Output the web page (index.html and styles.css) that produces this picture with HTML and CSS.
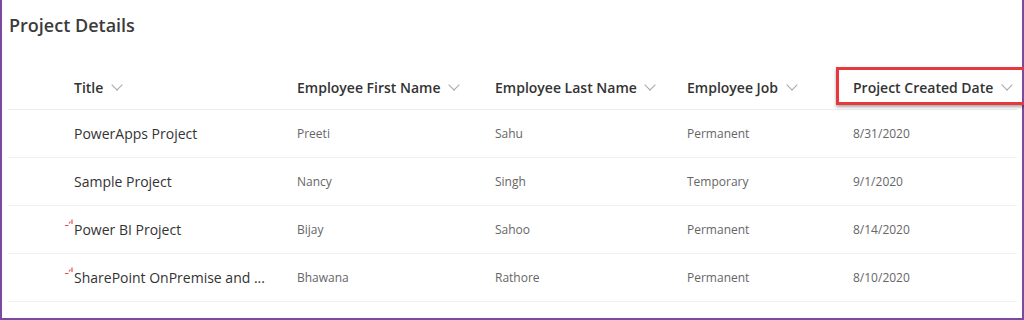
FILE: index.html
```html
<!DOCTYPE html>
<html lang="en">
<head>
  <meta charset="UTF-8" />
  <title>Project Details</title>
  <link rel="stylesheet" href="styles.css">
</head>
<body>
  <div class="frame">
    <h1 class="list-title">Project Details</h1>

    <div class="list">
      <div class="row head">
        <div class="cell title">Title <span class="chev"></span></div>
        <div class="cell">Employee First Name <span class="chev"></span></div>
        <div class="cell">Employee Last Name <span class="chev"></span></div>
        <div class="cell">Employee Job <span class="chev"></span></div>
        <div class="cell">
          <span class="marked">Project Created Date <span class="chev"></span></span>
        </div>
      </div>

      <div class="row">
        <div class="cell title">PowerApps Project</div>
        <div class="cell">Preeti</div>
        <div class="cell">Sahu</div>
        <div class="cell">Permanent</div>
        <div class="cell">8/31/2020</div>
      </div>
      <div class="row">
        <div class="cell title">Sample Project</div>
        <div class="cell">Nancy</div>
        <div class="cell">Singh</div>
        <div class="cell">Temporary</div>
        <div class="cell">9/1/2020</div>
      </div>
      <div class="row">
        <div class="cell title">
          <svg class="new" width="9" height="9" viewBox="0 0 9 9"><path d="M0 6.5h3.5M4 4.5L5.5 2.5M7 5V0.5" /></svg>
          Power BI Project
        </div>
        <div class="cell">Bijay</div>
        <div class="cell">Sahoo</div>
        <div class="cell">Permanent</div>
        <div class="cell">8/14/2020</div>
      </div>
      <div class="row">
        <div class="cell title">
          <svg class="new" width="9" height="9" viewBox="0 0 9 9"><path d="M0 6.5h3.5M4 4.5L5.5 2.5M7 5V0.5" /></svg>
          SharePoint OnPremise and ...
        </div>
        <div class="cell">Bhawana</div>
        <div class="cell">Rathore</div>
        <div class="cell">Permanent</div>
        <div class="cell">8/10/2020</div>
      </div>
    </div>
  </div>
</body>
</html>
```

FILE: styles.css
```css
* { box-sizing: border-box; }
body {
  margin: 0;
  background: #fff;
  font-family: "Open Sans", "Noto Sans", sans-serif;
  color: #323130;
}
.frame {
  height: 320px;
  border: 2px solid #7b4a9e;
  border-top: none;
  padding: 12px 0 0 6px;
}
.list-title {
  margin: 0 0 0 1px;
  font-size: 18px;
  font-weight: 600;
  line-height: 26px;
  color: #3b3b3b;
}
.list {
  margin-top: 22px;
  width: 1009px;
}
.row {
  display: grid;
  grid-template-columns: 223px 198px 192px 166px 1fr;
  padding-left: 66px;
  height: 48px;
  align-items: center;
  border-bottom: 1px solid #f0f0f0;
}
.row.head {
  height: 50px;
  padding-top: 6px;
  font-weight: 600;
  border-bottom-color: #ececec;
}
.cell {
  font-size: 12px;
  color: #666;
  white-space: nowrap;
  position: relative;
}
.head .cell {
  font-size: 14px;
  color: #333;
}
.cell.title {
  font-size: 14px;
  color: #333;
}
.chev {
  display: inline-block;
  width: 8px;
  height: 8px;
  border-right: 1px solid #a8a8a8;
  border-bottom: 1px solid #a8a8a8;
  transform: rotate(45deg);
  margin: 0 0 4px 6px;
}
.marked {
  position: relative;
  display: inline-block;
}
.marked::after {
  content: "";
  position: absolute;
  left: -17px;
  right: -25px;
  top: -11px;
  bottom: -8px;
  border: 3px solid #e8383d;
  box-shadow: 0 2px 3px rgba(0, 0, 0, 0.35);
}
.new {
  position: absolute;
  left: -9px;
  top: -1px;
  fill: none;
  stroke: #e0524f;
  stroke-width: 1.2;
}
```
